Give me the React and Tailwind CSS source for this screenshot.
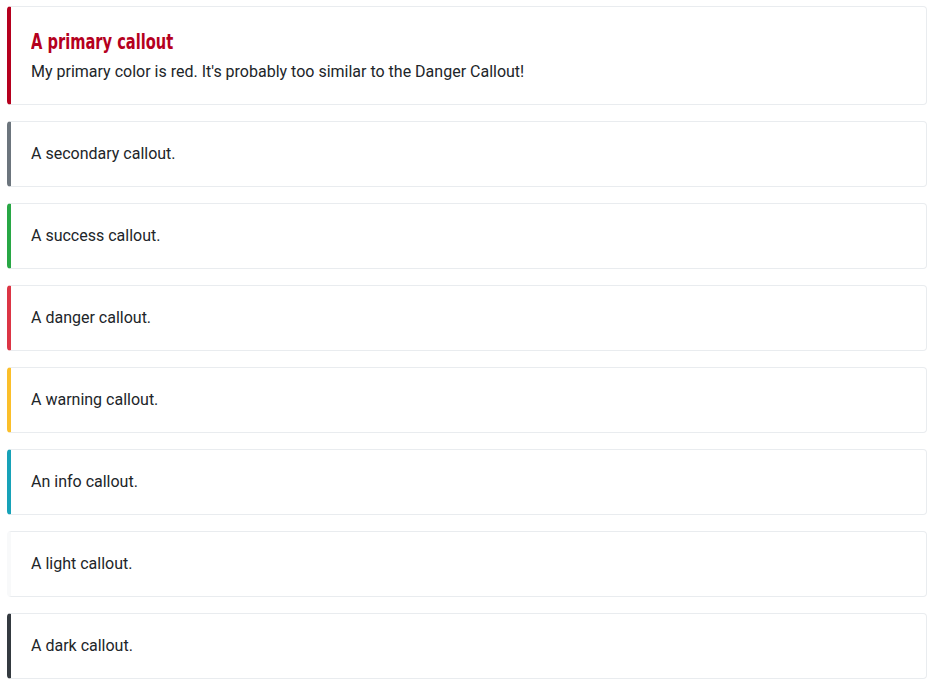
const callouts = [
  { key: "secondary", text: "A secondary callout.", bar: "border-l-[#6c757d]" },
  { key: "success", text: "A success callout.", bar: "border-l-[#28a745]" },
  { key: "danger", text: "A danger callout.", bar: "border-l-[#dc3545]" },
  { key: "warning", text: "A warning callout.", bar: "border-l-[#fbbf2a]" },
  { key: "info", text: "An info callout.", bar: "border-l-[#17a2b8]" },
  { key: "light", text: "A light callout.", bar: "border-l-[#f8f9fa]" },
  { key: "dark", text: "A dark callout.", bar: "border-l-[#343a40]" },
];

const Callout = ({ bar, children }) => (
  <div
    className={`rounded border border-[#e9ecef] border-l-4 ${bar} px-5 py-5 bg-white`}
  >
    {children}
  </div>
);

export default function App() {
  return (
    <div
      className="min-h-screen bg-white pt-[6px] pl-[7px] pr-[6px] text-[16px] leading-6 text-[#212529]"
      style={{ fontFamily: "Roboto, 'Liberation Sans', sans-serif" }}
    >
      <div className="flex flex-col gap-4">
        {/* primary */}
        <Callout bar="border-l-[#b5001e]">
          <h4 className="mb-1 pt-[2px] text-[21px] leading-[26.8px] font-bold text-[#b5001e]">
            <span
              className="inline-block origin-left scale-x-[0.775]"
              style={{
                fontFamily: "'DejaVu Sans Condensed', 'Roboto', sans-serif",
              }}
            >
              A primary callout
            </span>
          </h4>
          <p>
            My primary color is red. It's probably too similar to the Danger
            Callout!
          </p>
        </Callout>

        {callouts.map((c) => (
          <Callout key={c.key} bar={c.bar}>
            <p>{c.text}</p>
          </Callout>
        ))}
      </div>
    </div>
  );
}
